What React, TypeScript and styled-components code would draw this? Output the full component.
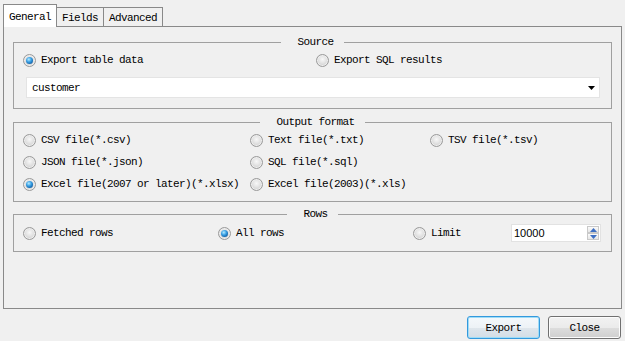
import React from "react";
import styled, { createGlobalStyle } from "styled-components";

const Global = createGlobalStyle`
  html, body { margin: 0; padding: 0; background: #f0f0f0; }
  body {
    font-family: "Liberation Mono", "DejaVu Sans Mono", monospace;
    font-size: 11px;
    letter-spacing: -0.6px;
    color: #000;
  }
  * { box-sizing: border-box; }
`;

const Window = styled.div`
  width: 625px;
  height: 341px;
  display: flex;
  flex-direction: column;
  padding: 4px 3px 2px 3px;
  background: #f0f0f0;
`;

const TabBar = styled.div`
  display: flex;
  align-items: flex-end;
  height: 22px;
  position: relative;
  z-index: 1;
`;

const Tab = styled.div<{ $active?: boolean; $w: number }>`
  width: ${(p) => p.$w}px;
  height: ${(p) => (p.$active ? 23 : 19)}px;
  margin-bottom: ${(p) => (p.$active ? -1 : 0)}px;
  margin-left: -1px;
  &:first-child { margin-left: 0; }
  border: 1px solid #898989;
  border-bottom: none;
  background: ${(p) => (p.$active ? "#ffffff" : "#f0f0f0")};
  display: flex;
  align-items: center;
  justify-content: center;
  padding-top: ${(p) => (p.$active ? 1 : 2)}px;
  line-height: 12px;
`;

const Pane = styled.div`
  height: 283px;
  border: 1px solid #898989;
  background: #f0f0f0;
  padding: 9px 9px 0 9px;
  display: flex;
  flex-direction: column;
`;

const Group = styled.fieldset<{ $gap?: number }>`
  margin: 0 0 ${(p) => p.$gap ?? 0}px 0;
  border: 1px solid #a0a0a0;
  padding: 0 9px;
  min-width: 0;
`;

const Legend = styled.legend`
  margin: 0 auto;
  padding: 0 13px;
  line-height: 12px;
  height: 12px;
  transform: translateX(3px);
`;

const Grid = styled.div<{ $cols: string; $rowGap?: number; $pt: number; $pb: number; $rowH: number }>`
  display: grid;
  grid-template-columns: ${(p) => p.$cols};
  grid-auto-rows: ${(p) => p.$rowH}px;
  row-gap: ${(p) => p.$rowGap ?? 0}px;
  align-items: center;
  padding-top: ${(p) => p.$pt}px;
  padding-bottom: ${(p) => p.$pb}px;
`;

const RadioLabel = styled.label`
  display: flex;
  align-items: center;
  gap: 5px;
  white-space: nowrap;
  line-height: 13px;
`;

const RadioCircle = styled.span<{ $checked?: boolean }>`
  width: 13px;
  height: 13px;
  flex: none;
  border-radius: 50%;
  border: 1px solid #9a9a9a;
  background: radial-gradient(circle at 50% 40%, #f8f8f8 0%, #e2e2e2 45%, #c2c2c2 100%);
  box-shadow: inset 0 0 0 1px #eeeeee;
  display: flex;
  align-items: center;
  justify-content: center;
  &::after {
    content: "";
    display: ${(p) => (p.$checked ? "block" : "none")};
    width: 7px;
    height: 7px;
    border-radius: 50%;
    background: radial-gradient(circle at 40% 35%, #b6ecff 0%, #3aa0e4 40%, #0d5aa0 80%, #0b3f73 100%);
  }
`;

const Combo = styled.div`
  height: 21px;
  margin: 10px 2px 10px 3px;
  background: #ffffff;
  border: 1px solid #e4e4e4;
  display: flex;
  align-items: center;
  justify-content: space-between;
  padding: 0 4px 0 5px;
`;

const SpinBox = styled.div`
  height: 18px;
  width: 90px;
  background: #ffffff;
  border: 1px solid #e2e2e2;
  display: flex;
  align-items: center;
  justify-content: space-between;
  padding: 0 1px 0 2px;
`;

const SpinValue = styled.span`
  font-family: "Liberation Sans", Arial, sans-serif;
  font-size: 11px;
  letter-spacing: 0;
`;

const SpinButtons = styled.div`
  display: flex;
  flex-direction: column;
`;

const SpinButton = styled.div`
  width: 12px;
  height: 7px;
  border: 1px solid #c9c9c9;
  background: linear-gradient(#fbfbfb, #e6e6e6);
  display: flex;
  align-items: center;
  justify-content: center;
`;

const ButtonRow = styled.div`
  margin-top: 7px;
  height: 23px;
  display: flex;
  justify-content: flex-end;
  gap: 8px;
  padding-right: 1px;
`;

const Button = styled.button<{ $default?: boolean }>`
  width: 73px;
  height: 23px;
  font: inherit;
  letter-spacing: -0.6px;
  color: #000;
  border-radius: 3px;
  padding: 0;
  border: 1px solid ${(p) => (p.$default ? "#3399dd" : "#707070")};
  background: ${(p) =>
    p.$default
      ? "linear-gradient(#f4f8fb 0%, #edf2f6 50%, #dfe6ec 51%, #d3dde6 100%)"
      : "linear-gradient(#f2f2f2 0%, #ebebeb 50%, #dddddd 51%, #cfcfcf 100%)"};
  box-shadow: inset 0 0 0 1px ${(p) => (p.$default ? "#9fdcf7" : "#fcfcfc")};
`;

const Radio = ({ label, checked }: { label: string; checked?: boolean }) => (
  <RadioLabel>
    <RadioCircle $checked={checked} />
    <span>{label}</span>
  </RadioLabel>
);

const Arrow = ({ dir, color }: { dir: "down" | "up"; color: string }) => (
  <svg width="7" height="4" viewBox="0 0 7 4">
    {dir === "down" ? (
      <polygon points="0,0 7,0 3.5,4" fill={color} />
    ) : (
      <polygon points="0,4 7,4 3.5,0" fill={color} />
    )}
  </svg>
);

export default function App() {
  return (
    <>
      <Global />
      <Window>
        <TabBar>
          <Tab $active $w={54}>General</Tab>
          <Tab $w={48}>Fields</Tab>
          <Tab $w={60}>Advanced</Tab>
        </TabBar>
        <Pane>
          <Group $gap={7}>
            <Legend>Source</Legend>
            <Grid $cols="293px 1fr" $pt={6} $pb={0} $rowH={13}>
              <Radio label="Export table data" checked />
              <Radio label="Export SQL results" />
            </Grid>
            <Combo>
              <span>customer</span>
              <Arrow dir="down" color="#000" />
            </Combo>
          </Group>
          <Group $gap={6}>
            <Legend>Output format</Legend>
            <Grid $cols="227px 180px 1fr" $rowGap={9} $pt={6} $pb={10} $rowH={13}>
              <Radio label="CSV file(*.csv)" />
              <Radio label="Text file(*.txt)" />
              <Radio label="TSV file(*.tsv)" />
              <Radio label="JSON file(*.json)" />
              <Radio label="SQL file(*.sql)" />
              <span />
              <Radio label="Excel file(2007 or later)(*.xlsx)" checked />
              <Radio label="Excel file(2003)(*.xls)" />
              <span />
            </Grid>
          </Group>
          <Group>
            <Legend>Rows</Legend>
            <Grid $cols="195px 195px 98px 1fr" $pt={4} $pb={9} $rowH={18}>
              <Radio label="Fetched rows" />
              <Radio label="All rows" checked />
              <Radio label="Limit" />
              <SpinBox>
                <SpinValue>10000</SpinValue>
                <SpinButtons>
                  <SpinButton>
                    <Arrow dir="up" color="#3d6fc4" />
                  </SpinButton>
                  <SpinButton>
                    <Arrow dir="down" color="#3d6fc4" />
                  </SpinButton>
                </SpinButtons>
              </SpinBox>
            </Grid>
          </Group>
        </Pane>
        <ButtonRow>
          <Button $default>Export</Button>
          <Button>Close</Button>
        </ButtonRow>
      </Window>
    </>
  );
}
